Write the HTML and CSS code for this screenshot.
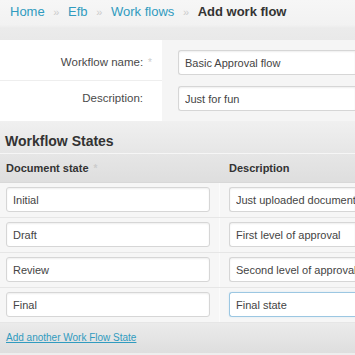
FILE: index.html
```html
<!DOCTYPE html>
<html>
	<head>
		<meta charset="utf-8">
		<title>Add work flow</title>
		<link rel="stylesheet" href="styles.css">
	</head>
	<body>
		<div id="breadcrumbs">
			<a href="#">Home</a> <span class="sep">&raquo;</span>
			<a href="#">Efb</a> <span class="sep">&raquo;</span>
			<a href="#">Work flows</a> <span class="sep">&raquo;</span>
			<strong>Add work flow</strong>
		</div>

		<div class="module">
			<div class="form-row">
				<div class="label">Workflow name:<span class="req">*</span></div>
				<div class="field"><input type="text" value="Basic Approval flow"></div>
			</div>
			<div class="form-row">
				<div class="label">Description:</div>
				<div class="field"><input type="text" value="Just for fun"></div>
			</div>
		</div>

		<div class="inline-group">
			<h2>Workflow States</h2>
			<div class="thead">
				<div class="col-state">Document state<span class="req">*</span></div>
				<div class="col-desc">Description</div>
			</div>
			<div class="trow">
				<div class="col-state"><input type="text" value="Initial"></div>
				<div class="col-desc"><input type="text" value="Just uploaded document"></div>
			</div>
			<div class="trow">
				<div class="col-state"><input type="text" value="Draft"></div>
				<div class="col-desc"><input type="text" value="First level of approval"></div>
			</div>
			<div class="trow">
				<div class="col-state"><input type="text" value="Review"></div>
				<div class="col-desc"><input type="text" value="Second level of approval"></div>
			</div>
			<div class="trow">
				<div class="col-state"><input type="text" value="Final"></div>
				<div class="col-desc"><input type="text" class="focus" value="Final state"></div>
			</div>
			<div class="add-row">
				<a href="#">Add another Work Flow State</a>
			</div>
		</div>
	</body>
</html>
```

FILE: styles.css
```css
* {
	margin: 0;
	padding: 0;
	box-sizing: border-box;
}
body {
	font-family: "Liberation Sans", Arial, sans-serif;
	background: #eee;
	color: #444;
	overflow: hidden;
}
a {
	color: #309bbf;
	text-decoration: none;
}
#breadcrumbs {
	height: 40px;
	padding: 4px 0 0 10px;
	font-size: 13px;
	line-height: 15px;
	white-space: nowrap;
	background: linear-gradient(#f6f6f6, #f2f2f2 62%, #ebebeb 70%, #e9e9e9);
}
#breadcrumbs .sep {
	color: #ccc;
	font-size: 11px;
	margin: 0 5px;
}
#breadcrumbs strong {
	color: #333;
}
.form-row {
	display: flex;
}
.form-row .label {
	width: 162px;
	flex: none;
	background: #fff;
	text-align: right;
	padding: 5px 19px 5px 0;
	font-size: 11.5px;
	line-height: 25px;
	color: #4a4a4a;
	border-bottom: 1px solid #eee;
}
.form-row .field {
	flex: 1;
	min-width: 0;
	background: #f5f5f5;
	padding: 5px 0 5px 16px;
}
.form-row:first-child > div {
	padding-top: 10px;
}
.form-row:last-child > div {
	padding-bottom: 10px;
	border-bottom: 0;
}
.req {
	color: #ccc;
	font-size: 10px;
	margin-left: 5px;
	margin-right: -9px;
}
input {
	font-family: "Liberation Sans", Arial, sans-serif;
	font-size: 11px;
	color: #444;
	height: 25px;
	padding: 0 6px;
	border: 1px solid #d6d6d6;
	border-radius: 3px;
	background: #fff;
	box-shadow: inset 0 1px 2px #eee;
	outline: none;
}
/* inputs that run on past the right edge */
.field input, .col-desc input {
	width: 100%;
	padding-right: 0;
	border-right: 0;
	border-radius: 3px 0 0 3px;
}
input.focus {
	border-color: #9cc7e2;
	box-shadow: 0 0 2px #d5e8f4;
}
.inline-group h2 {
	height: 33px;
	padding: 12px 0 0 5px;
	font-size: 14px;
	line-height: 16px;
	color: #333;
	background: linear-gradient(#f0f0f0, #e6e6e6);
	border-bottom: 1px solid #f6f6f6;
}
.thead, .trow {
	display: flex;
	white-space: nowrap;
}
.thead {
	height: 29px;
	font-size: 11px;
	font-weight: bold;
	line-height: 28px;
	color: #333;
	background: linear-gradient(#e6e6e6, #dedede);
	border-bottom: 1px solid #d8d8d8;
}
.col-state {
	width: 220px;
	flex: none;
	padding: 0 10px 0 6px;
}
.col-desc {
	flex: 1;
	min-width: 0;
	padding-left: 9px;
}
.trow {
	background: #f6f6f6;
	border-bottom: 1px solid #e6e6e6;
}
.trow > div {
	padding-top: 4px;
	padding-bottom: 5px;
}
.trow .col-state {
	border-right: 1px solid #fbfbfb;
}
.trow .col-state input {
	width: 204px;
}
.add-row {
	height: 30px;
	padding: 9px 0 0 6px;
	font-size: 10px;
	line-height: 12px;
	background: linear-gradient(#ebebeb, #dedede);
}
.add-row a {
	text-decoration: underline;
}
```
